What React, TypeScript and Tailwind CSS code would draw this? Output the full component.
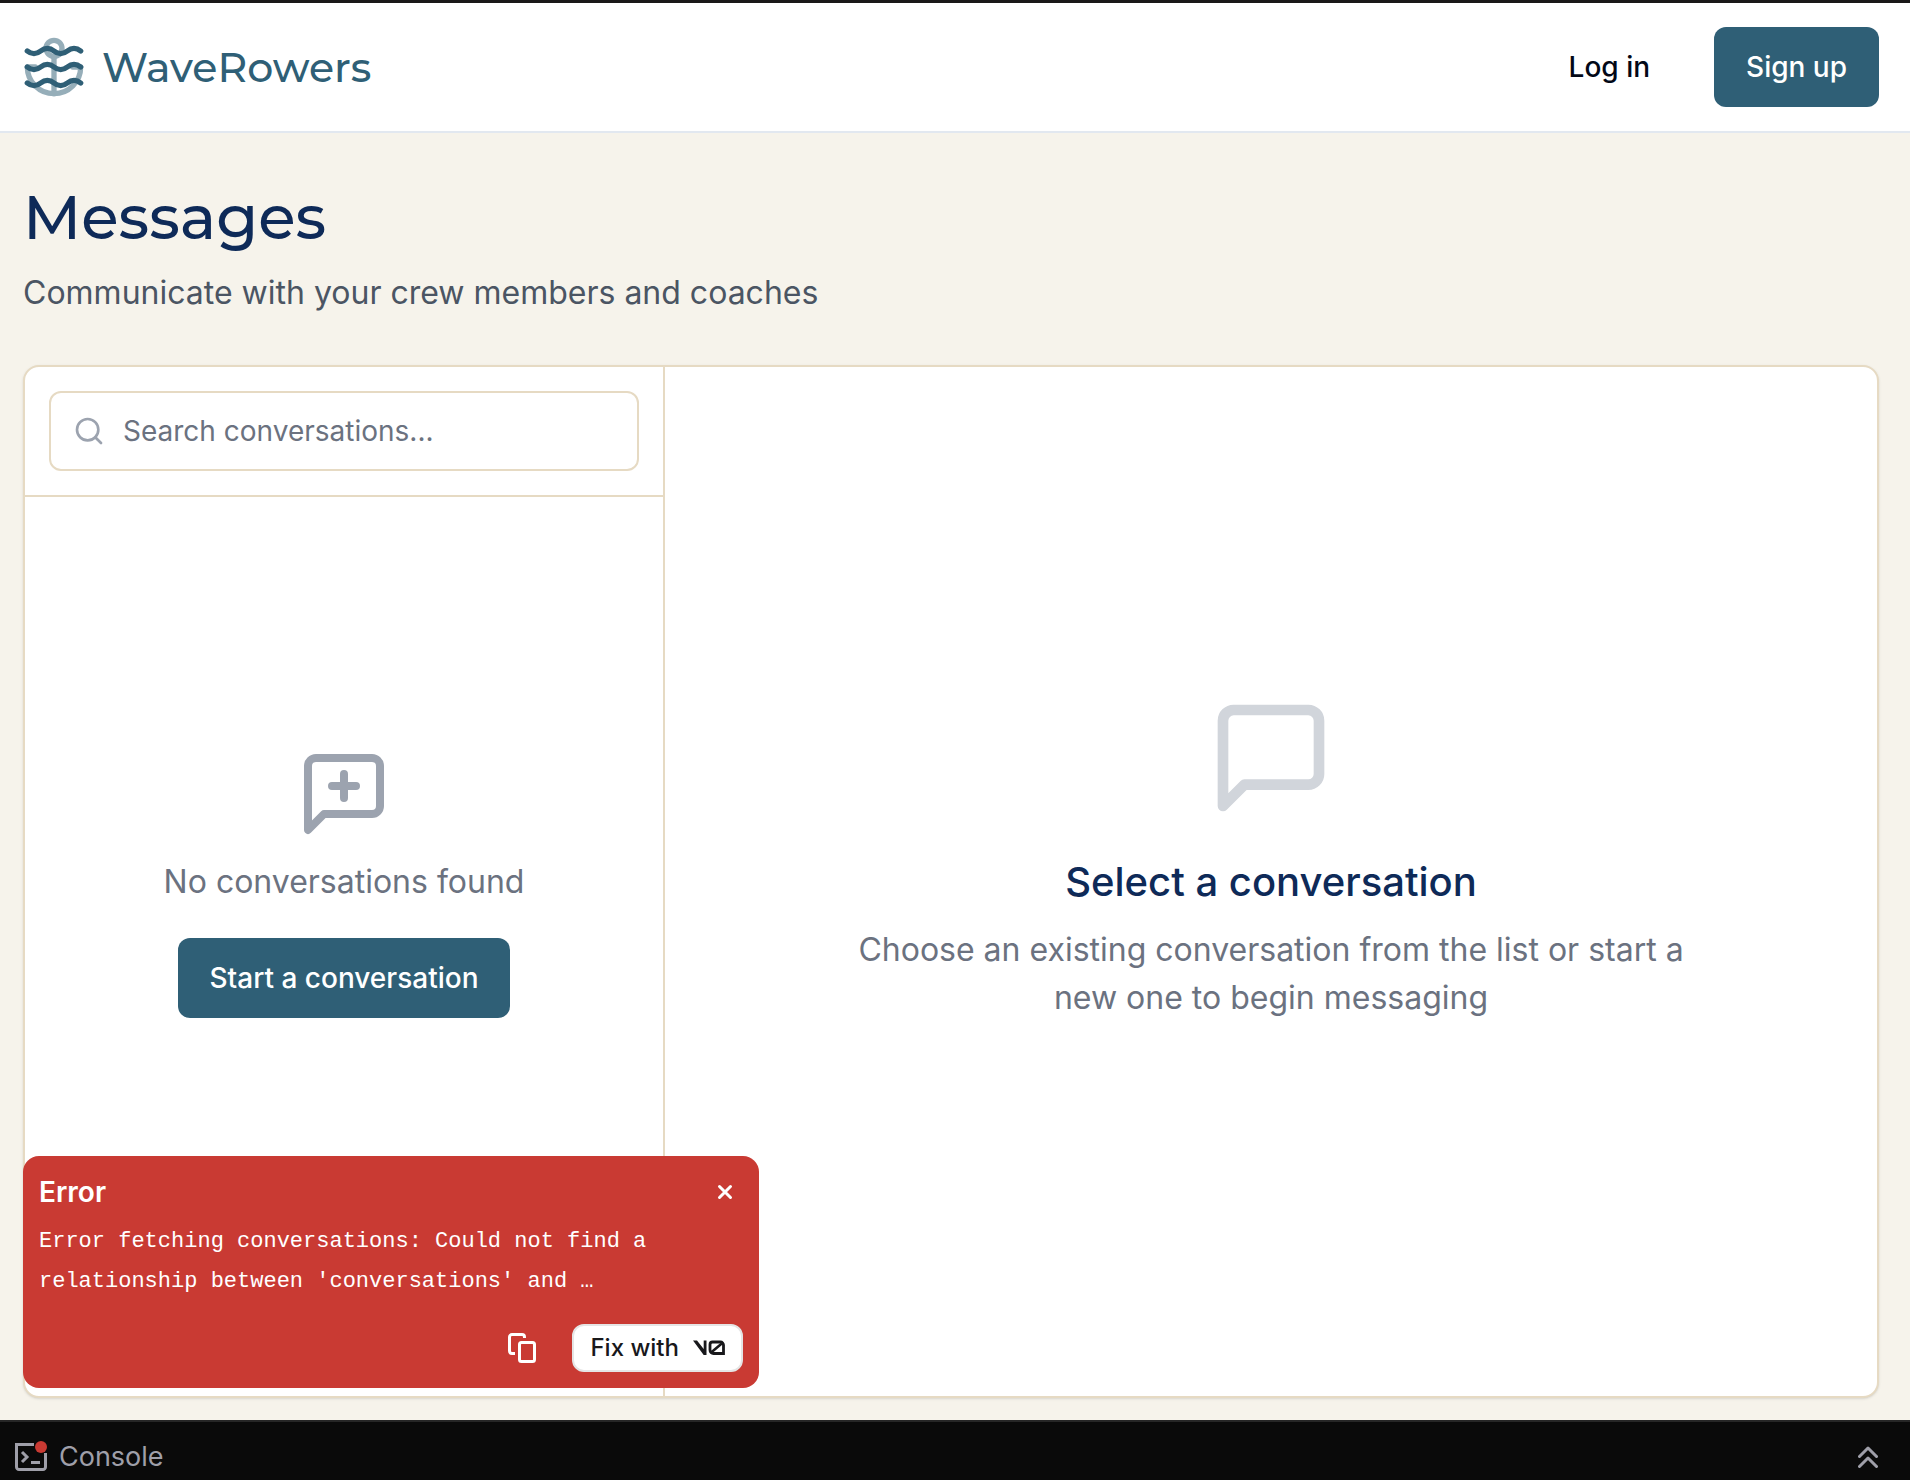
import React from "react";
import { Search } from "lucide-react";

function Logo() {
  return (
    <svg viewBox="0 0 24 24" className="size-16" fill="none" stroke="#2f5f76" strokeLinecap="round" strokeLinejoin="round" strokeWidth="2" aria-hidden="true">
      <g opacity="0.5">
        <circle cx="12" cy="5" r="3" />
        <path d="M12 22V8" />
        <path d="M5 12H2a10 10 0 0 0 20 0h-3" />
      </g>
      <path d="M2 6c.6.5 1.2 1 2.5 1C7 7 7 5 9.5 5c2.6 0 2.4 2 5 2 2.500 0 2.500-2 5-2 1.300 0 1.900.5 2.500 1" />
      <path d="M2 12c.6.5 1.200 1 2.500 1 2.500 0 2.500-2 5-2 2.600 0 2.400 2 5 2 2.500 0 2.500-2 5-2 1.300 0 1.900.5 2.500 1" />
      <path d="M2 18c.6.5 1.200 1 2.500 1 2.500 0 2.500-2 5-2 2.600 0 2.400 2 5 2 2.500 0 2.500-2 5-2 1.300 0 1.900.5 2.500 1" />
    </svg>
  );
}

function ChatBubble({ className, plus = false }: { className: string; plus?: boolean }) {
  return (
    <svg viewBox="0 0 24 24" className={className} fill="none" stroke="currentColor" strokeWidth="2" strokeLinecap="round" strokeLinejoin="round" aria-hidden="true">
      <path d="M21 15a2 2 0 0 1-2 2H7l-4 4V5a2 2 0 0 1 2-2h14a2 2 0 0 1 2 2z" />
      {plus && <path d="M12 7v6M9 10h6" />}
    </svg>
  );
}

function Header() {
  return (
    <header className="flex h-[130px] items-center justify-between border-b-2 border-slate-200 bg-white pr-[31px] pl-[22px]">
      <a href="#" className="flex items-center gap-4">
        <Logo />
        <span className="font-['Montserrat','Inter',sans-serif] text-[41px] leading-14 font-medium text-[#2f5f76]">WaveRowers</span>
      </a>
      <nav className="flex items-center gap-8">
        <button className="h-20 rounded-xl px-8 text-[28px] leading-10 font-medium text-[#020817]">Log in</button>
        <button className="h-20 rounded-xl bg-[#2f5f76] px-8 text-[28px] leading-10 font-medium text-white">Sign up</button>
      </nav>
    </header>
  );
}

function Sidebar() {
  return (
    <aside className="flex w-[640px] shrink-0 flex-col border-r-2 border-[#e6dac3]">
      <div className="border-b-2 border-[#e6dac3] p-6">
        <label className="flex h-20 items-center gap-[18px] rounded-xl border-2 border-[#e6dac3] px-[22px]">
          <Search className="size-8 shrink-0 text-[#9ca3af]" aria-hidden="true" />
          <input
            type="text"
            aria-label="Search conversations"
            placeholder="Search conversations..."
            className="min-w-0 flex-1 text-[28px] leading-10 outline-none placeholder:text-[#6b7280]"
          />
        </label>
      </div>
      <div className="flex flex-1 flex-col items-center justify-center px-8 pb-[130px] text-center">
        <ChatBubble plus className="size-24 text-[#9ca3af]" />
        <p className="mt-4 text-[32px] leading-12 text-[#6b7280]">No conversations found</p>
        <button className="mt-8 h-20 rounded-xl bg-[#2f5f76] px-8 text-[28px] leading-10 font-medium text-white">Start a conversation</button>
      </div>
    </aside>
  );
}

function EmptyConversation() {
  return (
    <section className="flex flex-1 flex-col items-center justify-center px-8 pb-12 text-center">
      <ChatBubble className="size-32 text-[#d1d5db]" />
      <h2 className="mt-8 text-[40px] leading-14 font-medium text-[#0e2a58]">Select a conversation</h2>
      <p className="mt-4 max-w-4xl text-[32px] leading-12 text-[#6b7280]">
        Choose an existing conversation from the list or start a new one to begin messaging
      </p>
    </section>
  );
}

function V0Mark() {
  return (
    <svg viewBox="0 0 32 16" className="h-4 w-8" aria-hidden="true">
      <path d="M0 .5h4L10.700 9V.5h2.800V15h-2.800L0 .5Z" fill="#18181b" />
      <path d="M19.500 2h8A3 3 0 0 1 30.500 5v8.500h-10a3.500 3.500 0 0 1-3.500-3.500V4.500A2.500 2.500 0 0 1 19.500 2Z" fill="none" stroke="#18181b" strokeWidth="2.800" />
      <path d="M17.500 13 30 2.500" fill="none" stroke="#18181b" strokeWidth="2.500" />
    </svg>
  );
}

function ErrorToast() {
  return (
    <div role="alert" className="absolute bottom-8 left-[23px] flex h-58 w-184 flex-col justify-between rounded-2xl bg-[#c93a33] p-4 text-white">
      <div>
        <div className="flex h-10 items-center justify-between pr-0.5">
          <h3 className="text-[28px] leading-10 font-semibold">Error</h3>
          <button aria-label="Dismiss" className="flex size-8 items-center justify-center">
            <svg viewBox="0 0 16 16" className="size-4" fill="none" stroke="currentColor" strokeWidth="3" strokeLinecap="round" aria-hidden="true">
              <path d="M2.500 2.500l11 11M13.500 2.500l-11 11" />
            </svg>
          </button>
        </div>
        <p className="mt-[10px] max-w-160 font-['Liberation_Mono',monospace] text-[22px] leading-10">
          Error fetching conversations: Could not find a relationship between 'conversations' and …
        </p>
      </div>
      <div className="flex items-center justify-end gap-9">
        <button aria-label="Copy error" className="flex h-12 w-7 items-center justify-center">
          <svg viewBox="0 0 28 30" className="h-[30px] w-7" fill="none" stroke="currentColor" strokeWidth="3" aria-hidden="true">
            <path d="M7 20.500H4A2.500 2.500 0 0 1 1.500 18V4A2.500 2.500 0 0 1 4 1.500h10A2.500 2.500 0 0 1 16.500 4v1" />
            <rect x="11.500" y="9.500" width="15" height="19" rx="2" />
          </svg>
        </button>
        <button className="flex h-12 items-center gap-[14px] rounded-xl border-2 border-neutral-200 bg-white px-4 text-2xl font-medium text-zinc-900">
          Fix with
          <V0Mark />
        </button>
      </div>
    </div>
  );
}

function ConsoleBar() {
  return (
    <footer className="flex h-15 shrink-0 items-start justify-between border-t-2 border-[#262626] bg-[#0a0a0a] pt-[15px] pr-8 pl-[15px] text-zinc-400">
      <button className="flex items-center gap-3">
        <svg viewBox="0 0 32 32" className="size-8" fill="none" stroke="currentColor" strokeWidth="3" aria-hidden="true">
          <path d="M19 3.500H1.500V26A2.500 2.500 0 0 0 4 28.500h24a2.500 2.500 0 0 0 2.500-2.500V12" />
          <path d="M7 11l5 5-5 5M16 21.500h9" />
          <circle cx="26" cy="6" r="6" fill="#c93a33" stroke="none" />
        </svg>
        <span className="text-[27px] leading-10">Console</span>
      </button>
      <button aria-label="Expand console" className="flex h-10 items-center">
        <svg viewBox="0 0 20 22" className="h-[22px] w-5" fill="none" stroke="currentColor" strokeWidth="3" strokeLinecap="round" strokeLinejoin="round" aria-hidden="true">
          <path d="M1.500 10.500 10 2l8.500 8.500M1.500 20.500 10 12l8.500 8.500" />
        </svg>
      </button>
    </footer>
  );
}

export default function App() {
  return (
    <div className="flex min-h-screen flex-col border-t-3 border-[#1a1818] bg-[#f6f3eb] font-['Inter',sans-serif]">
      <div className="relative flex flex-1 flex-col">
        <Header />
        <main className="flex flex-1 flex-col pt-12 pr-[31px] pb-[22px] pl-[23px]">
          <h1 className="font-['Montserrat','Inter',sans-serif] text-[61px] leading-18 font-medium text-[#0e2a58]">Messages</h1>
          <p className="mt-4 text-[32px] leading-12 text-[#4b5563]">Communicate with your crew members and coaches</p>
          <div className="mt-12 flex flex-1 overflow-hidden rounded-2xl border-2 border-[#e6dac3] bg-white shadow-sm">
            <Sidebar />
            <EmptyConversation />
          </div>
        </main>
        <ErrorToast />
      </div>
      <ConsoleBar />
    </div>
  );
}
